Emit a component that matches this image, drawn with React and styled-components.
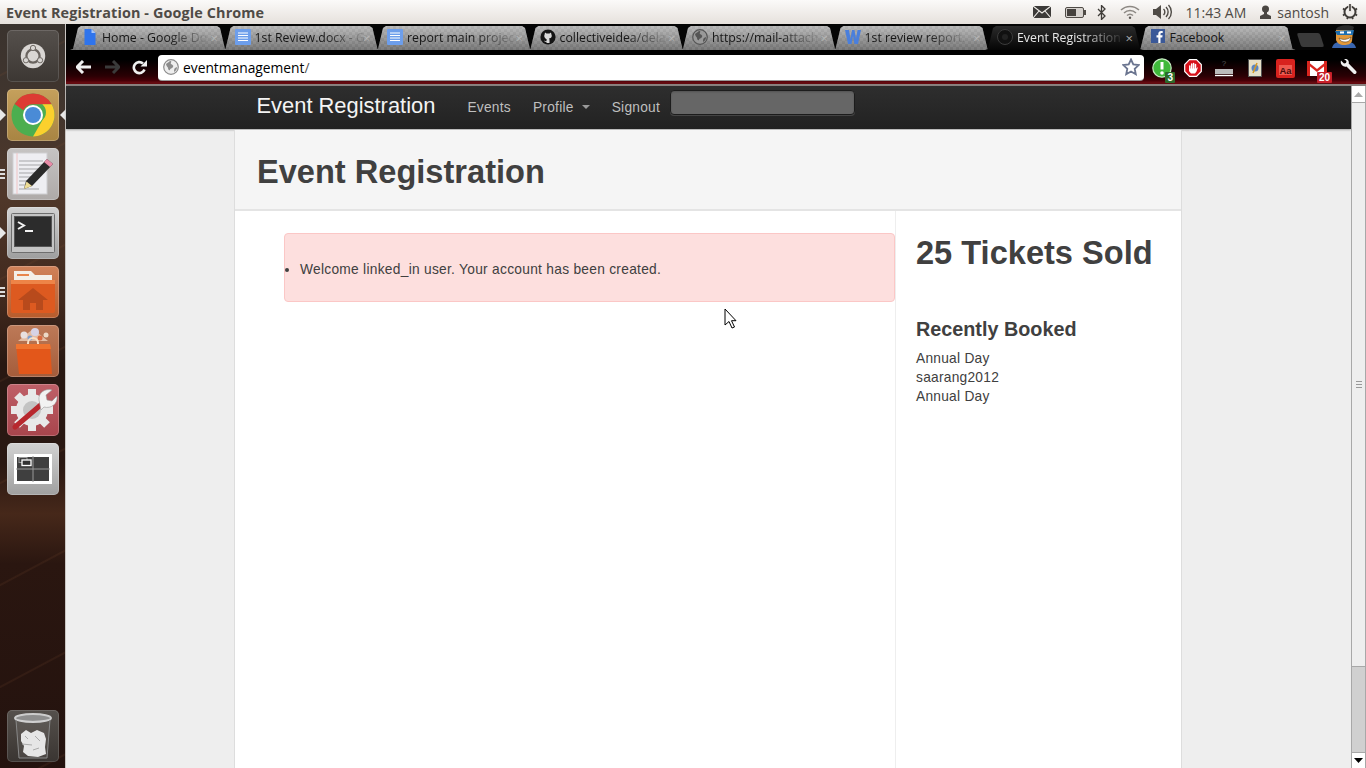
import React from "react";
import styled, { createGlobalStyle } from "styled-components";

const Global = createGlobalStyle`
  html, body { margin: 0; padding: 0; height: 768px; overflow: hidden; background: #eee; }
  * { box-sizing: border-box; }
  #root { height: 768px; }
`;
const UI = `"Open Sans", "Noto Sans", sans-serif`;
const WEB = `"Liberation Sans", Arial, sans-serif`;

const Screen = styled.div`position: relative; width: 1366px; height: 768px; display: flex; flex-direction: column; overflow: hidden;`;
const TitleBar = styled.header`
  height: 24px; flex: none; display: flex; align-items: center; justify-content: space-between; padding: 0 8px 0 6px;
  background: linear-gradient(#fbfaf9, #e6e1dc); font-family: ${UI}; color: #4f4b46;
`;
const WindowTitle = styled.div`font-size: 14.4px; font-weight: 700; letter-spacing: 0.12px;`;
const Indicators = styled.div`display: flex; align-items: center; height: 24px;`;
const Indicator = styled.span`display: flex; align-items: center; margin-left: ${p => p.$gap}px; font-size: 14px; color: #4f4b46; white-space: nowrap;`;
const Desk = styled.div`flex: 1; display: flex; min-height: 0;`;
const Launcher = styled.nav`
  width: 66px; flex: none; position: relative; display: flex; flex-direction: column; align-items: center; padding: 6px 0; gap: 7px;
  border-right: 1px solid #c9c5c2;
  background:
    repeating-linear-gradient(152deg, transparent 0 44px, rgba(130,80,50,.14) 45px 46px, transparent 47px 90px),
    linear-gradient(#3a332e 0, #40352e 70px, #50382a 170px, #40281d 280px, #281812 340px, #2a1812 440px, #46281a 490px, #2a1610 540px, #23120e 768px);
`;
const Tile = styled.div`
  position: relative; width: 52px; height: 52px; flex: none; border-radius: 5px; display: flex; align-items: center; justify-content: center;
  background: ${p => p.$bg}; box-shadow: inset 0 0 0 1px rgba(255,255,255,.22);
  ${p => p.$bottom && "margin-top: auto;"}
  ${p => p.$ghost && "box-shadow: inset 0 0 0 1px rgba(255,255,255,.14);"}
`;
const ArrowPip = styled.i`
  position: absolute; top: 20px; ${p => p.$right ? "right: -7px; border-right: 6px solid #e8e8e8;" : "left: -7px; border-left: 6px solid #e8e8e8;"}
  border-top: 6px solid transparent; border-bottom: 6px solid transparent; width: 0; height: 0;
`;
const DotPips = styled.i`position: absolute; left: -7px; top: ${p => p.$top}px; display: flex; flex-direction: column; gap: 2px;`;
const Dot = styled.b`display: block; width: 5px; height: 2px; background: #ddd;`;
const Browser = styled.main`flex: 1; min-width: 0; display: flex; flex-direction: column; background: #000;`;
const TabStrip = styled.div`height: 26px; flex: none; display: flex; padding: 2px 0 0 4px; position: relative; background: #050505;`;
const Tab = styled.div`
  width: 158px; margin-right: -5.5px; height: 24px; flex: none; position: relative; display: flex; align-items: center; padding: 0 0 2px 12px;
  ${p => p.$active && "z-index: 1;"}
  clip-path: polygon(0 100%, 3px 96%, 8px 8%, 11px 0, calc(100% - 11px) 0, calc(100% - 8px) 8%, calc(100% - 3px) 96%, 100% 100%);
  font-family: ${UI}; font-size: 12.3px; color: ${p => p.$active ? "#e8e8e8" : "#161616"};
  background: ${p => p.$active
    ? "linear-gradient(#2b2b2b, #050505)"
    : "linear-gradient(rgba(225,225,225,.35), rgba(20,20,20,.3)), repeating-conic-gradient(#a8a8a8 0 25%, #999 0 50%) 0 0 / 6px 6px"};
`;
const TabIcon = styled.span`width: 16px; height: 16px; flex: none; display: flex; justify-content: center; margin-right: 4px;`;
const TabLabel = styled.span`
  white-space: nowrap;
  mask-image: ${p => p.$plain ? "none" : "linear-gradient(90deg, #000 62%, rgba(0,0,0,.08) 100%)"};
`;
const TabClose = styled.span`position: absolute; right: 10px; top: 3px; font-size: 13px; color: ${p => p.$active ? "#aaa" : "rgba(255,255,255,.3)"};`;
const NewTab = styled.div`width: 23px; height: 14px; flex: none; margin: 7px 0 0 9px; background: #3a3a3a; transform: skewX(18deg); border-radius: 2px;`;
const Mascot = styled.div`position: absolute; right: 8px; top: 0; width: 28px; height: 24px;`;
const Toolbar = styled.div`
  height: 36px; flex: none; display: flex; align-items: flex-start; padding: 5px 0 0 4px;
  border-bottom: 2px solid #8a8280;
  background: linear-gradient(#000 0, #000 10px, #2a0004 26px, #4a0008 31px, #640a10 32px, #640a10 34px);
`;
const NavBtn = styled.span`width: ${p => p.$w || 28}px; height: 24px; flex: none; display: flex; align-items: center; justify-content: center;`;
const Omnibox = styled.div`
  width: 986px; height: 25px; margin-left: 6px; flex: none; background: #fff; border-radius: 4px; display: flex; align-items: center; padding: 0 4px 1px 5px;
  font-family: ${UI}; font-size: 13.8px; color: #000; box-shadow: 0 1px 0 #999;
`;
const UrlIcon = styled.span`width: 16px; height: 16px; display: flex; margin-right: 4px;`;
const Url = styled.span`flex: 1;`;
const UrlSlash = styled.span`color: #555;`;
const Extensions = styled.div`display: flex; margin-left: 2px; padding-top: 1px;`;
const Ext = styled.span`position: relative; width: 31px; height: 24px; display: flex; align-items: center; justify-content: center;`;
const Badge = styled.b`
  position: absolute; right: ${p => p.$r}px; bottom: -3px; padding: 0 2px; height: 11px; font: 700 10px/11px ${WEB}; color: #fff; background: ${p => p.$bg}; border-radius: 1px;
`;
const Viewport = styled.div`flex: 1; min-height: 0; display: flex; background: #eee; position: relative;`;
const Page = styled.div`flex: 1; min-width: 0; display: flex; flex-direction: column; font-family: ${WEB}; color: #404040;`;
const NavBar = styled.div`
  height: 43px; flex: none; background: linear-gradient(#2e2e2e, #222); box-shadow: 0 1px 2px rgba(0,0,0,.3); display: flex; justify-content: center;
`;
const NavInner = styled.div`width: 948px; padding: 0 0 0 22px; display: flex; align-items: center;`;
const Brand = styled.a`font-size: 21.9px; color: #f4f4f4; margin-top: -4px;`;
const NavLink = styled.a`font-size: 13.75px; letter-spacing: 0.25px; color: #bfbfbf; margin-left: ${p => p.$gap}px; display: flex; align-items: center;`;
const Caret = styled.i`display: block; width: 0; height: 0; margin-left: 8px; border-left: 4px solid transparent; border-right: 4px solid transparent; border-top: 4px solid #999; margin-top: -1px;`;
const Search = styled.input`
  width: 185px; height: 25px; margin: -10px 0 0 10px; background: #666; border: 1px solid #1c1c1c; border-radius: 4px; box-shadow: inset 0 1px 2px rgba(0,0,0,.2), 0 1px 0 #444;
`;
const ContentRow = styled.div`flex: 1; min-height: 0; display: flex; justify-content: center; padding-right: 1px;`;
const Container = styled.section`width: 948px; flex: none; margin-top: 1px; background: #fff; border-left: 1px solid #ddd; border-right: 1px solid #ddd; display: flex; flex-direction: column; min-height: 0;`;
const Hero = styled.div`height: 81px; flex: none; background: #f5f5f5; border-bottom: 2px solid #e4e4e4; padding: 4px 0 0 22px; display: flex; align-items: center;`;
const HeroTitle = styled.h1`margin: 0; font-size: 32.6px; font-weight: 700; color: #404040;`;
const Columns = styled.div`flex: 1; display: flex; min-height: 0;`;
const MainCol = styled.div`width: 661px; flex: none; padding: 22px 0 0 49px; border-right: 1px solid #eee;`;
const Alert = styled.div`width: 611px; height: 69px; padding-top: 4px; background: #fddfde; border: 1px solid #fbc7c6; border-radius: 4px; font-size: 13.75px; display: flex; align-items: center;`;
const AlertList = styled.ul`margin: 0; padding: 0 0 0 15px; color: #404040; letter-spacing: 0.28px;`;
const SideCol = styled.aside`flex: 1; padding: 22px 0 0 20px;`;
const SideTitle = styled.h2`margin: 0; font-size: 32.6px; line-height: 40px; font-weight: 700;`;
const SideSub = styled.h3`margin: 41px 0 0; font-size: 19.8px; line-height: 30px; font-weight: 700;`;
const Booked = styled.div`margin-top: 5px; display: flex; flex-direction: column; font-size: 13.75px; line-height: 19px; letter-spacing: 0.25px;`;
const Scrollbar = styled.div`width: 15px; flex: none; display: flex; flex-direction: column; background: #d0d0d0; border-left: 1px solid #a8a8a8; border-right: 1px solid #a8a8a8;`;
const ScrollBtn = styled.div`height: 16px; flex: none; background: #fff; display: flex; align-items: center; justify-content: center; ${p => p.$down && "margin-top: auto; border-top: 1px solid #a8a8a8;"}`;
const Thumb = styled.div`height: 565px; flex: none; background: #eee; border-top: 1px solid #a8a8a8; border-bottom: 1px solid #a8a8a8; display: flex; align-items: center; justify-content: center;`;
const Grip = styled.div`width: 6px; height: 7px; background: repeating-linear-gradient(#999 0 1px, transparent 1px 3px);`;
const Cursor = styled.svg`position: absolute; left: 724px; top: 308px;`;

const Globe = ({ s = 16, c = "#8c8c8c", d = "#eee" }) => (
  <svg width={s} height={s} viewBox="0 0 16 16"><circle cx="8" cy="8" r="7.3" fill={d} stroke={c} strokeWidth="1.2" /><path d="M3 5c2-1 3-3 5-3 1 1-1 2 0 3s3 1 2 3-3 1-3 3c-1 1-2-1-2-2S3 7 3 5zM12 9l2-1c0 2-1 4-3 5 0-2 0-3 1-4z" fill={c} /></svg>
);
const DocIcon = () => (
  <svg width="16" height="16" viewBox="0 0 16 16"><rect width="16" height="16" fill="#6d9eeb" rx="1"/><path d="M3 4h10M3 6.500h10M3 9h10M3 11.500h10" stroke="#fff" strokeWidth="1.2"/></svg>
);
const DriveDoc = () => (
  <svg width="12" height="16" viewBox="3 0 11 16"><path d="M3 0h7l4 4v12H3z" fill="#2f74ec"/><path d="M10 0l4 4h-4z" fill="#a9c6f8"/></svg>
);
const GitHub = () => (
  <svg width="16" height="16" viewBox="0 0 16 16"><circle cx="8" cy="8" r="7.6" fill="#151515"/><path d="M5 3.500l1.500 1h3l1.500-1 .4 2c.8 1.500.4 3.500-2.400 4 .5.500.5 1 .5 2.500v2H6.500v-1.200c-1.500.3-2-.3-2.500-1.300 1 .3 1.500 1 2.500.6 0-.6 0-1 .3-1.600C4.200 9 3.800 7 4.600 5.500z" fill="#d9d9d9"/></svg>
);
const WIcon = () => <svg width="16" height="16" viewBox="0 0 16 16"><path d="M0 1h4l1.500 9L7 1h2.500L11 10l1.500-9H16l-3 14h-3.500L8 7l-1.500 8H3z" fill="#4a7fdc"/></svg>;
const ChromeDark = () => <svg width="16" height="16" viewBox="0 0 16 16"><circle cx="8" cy="8" r="7.500" fill="#111" stroke="#3c3c3c"/><circle cx="8" cy="8" r="3" fill="#222"/></svg>;
const FB = () => <svg width="14" height="14" viewBox="0 0 14 14"><rect width="14" height="14" fill="#3b5998"/><path d="M9.500 14V8.500h1.800l.3-2.200H9.500V5c0-.7.200-1.100 1.100-1.100h1.100V2c-.5-.1-1-.1-1.600-.1-1.700 0-2.800 1-2.800 2.900v1.500H5.500v2.200h1.800V14z" fill="#fff"/></svg>;

const tabs = [
  [<DriveDoc />, "Home - Google Do"], [<DocIcon />, "1st Review.docx - G"], [<DocIcon />, "report main projec"],
  [<GitHub />, "collectiveidea/dela"], [<Globe c="#555" d="#999" />, "https://mail-attach"], [<WIcon />, "1st review report."],
  [<ChromeDark />, "Event Registration", true], [<FB />, "Facebook", false, true],
];

const Dash = () => (
  <svg width="32" height="32" viewBox="0 0 34 34"><circle cx="17" cy="17" r="13" fill="#d9d6d3"/><circle cx="17" cy="17" r="7" fill="none" stroke="#6a645f" strokeWidth="2.400"/><circle cx="17" cy="8.500" r="2.800" fill="#d9d6d3" stroke="#6a645f"/><circle cx="9.500" cy="21.500" r="2.800" fill="#d9d6d3" stroke="#6a645f"/><circle cx="24.500" cy="21.500" r="2.800" fill="#d9d6d3" stroke="#6a645f"/></svg>
);
const ChromeLogo = () => (
  <svg width="44" height="44" viewBox="0 0 44 44">
    <circle cx="22" cy="22" r="21.500" fill="#4cae4f"/>
    <path d="M22 .5a21.500 21.500 0 0 1 18.600 10.750H22a10.750 10.750 0 0 0-9.600 5.900L3.600 10.900A21.500 21.500 0 0 1 22 .5z" fill="#dd3b33"/>
    <path d="M40.600 11.250A21.500 21.500 0 0 1 22 43.500l9.300-16.100a10.750 10.750 0 0 0 0-16.150z" fill="#fbd02d"/>
    <circle cx="22" cy="22" r="10" fill="#fff"/><circle cx="22" cy="22" r="8" fill="#4a8bd6"/>
  </svg>
);
const Gedit = () => (
  <svg width="42" height="44" viewBox="0 0 42 44">
    <rect x="1" y="1" width="34" height="41" fill="#eeeef2" stroke="#cfcfd2"/>
    <path d="M5 1v41" stroke="#f0c4c4"/><path d="M7 9h24M7 13h24M7 17h20M7 21h22M7 25h16M7 29h12M7 33h8M7 37h20" stroke="#a5a5a8" strokeWidth="1"/>
    <path d="M35 7l6 5-21 22-8 3 2-8z" fill="#2a2a2a"/><path d="M35 7l6 5-3 3-6-5z" fill="#e88ca8"/><path d="M14.500 29.500l5.500 4.500-8 3z" fill="#eedc96"/>
  </svg>
);
const Terminal = () => (
  <svg width="44" height="40" viewBox="0 0 44 40">
    <rect x=".5" y=".5" width="43" height="39" rx="1" fill="#c4c4c4" stroke="#6e6e6e"/><rect x="3.500" y="3.500" width="37" height="30" fill="#2c2c2c" stroke="#555"/>
    <path d="M7 9l6 3.500-6 3.500" fill="none" stroke="#f2f2f2" strokeWidth="2"/><path d="M14 18h8" stroke="#f2f2f2" strokeWidth="2"/>
  </svg>
);
const Folder = () => (
  <svg width="46" height="46" viewBox="0 0 46 46">
    <path d="M4 2h17l4 4h17v12H4z" fill="#f4efe8"/><path d="M7 5h12v2H7z" fill="#e9854c"/>
    <path d="M1 11h44v31a2 2 0 0 1-2 2H3a2 2 0 0 1-2-2z" fill="#dd5a20"/><path d="M1 11h44v4H1z" fill="#ee8447"/>
    <path d="M23 19L8 31h5v10h7v-7h6v7h7V31h5z" fill="#b84a1c"/>
  </svg>
);
const Bag = () => (
  <svg width="46" height="48" viewBox="0 0 46 48">
    <path d="M8 14L23 2l15 12z" fill="#f6dcc6" opacity=".7"/>
    <circle cx="14" cy="8" r="3.500" fill="#e8e0e0"/><circle cx="25" cy="5" r="4" fill="#d7d3e6"/><circle cx="36" cy="8" r="2.500" fill="#ecd9c6"/><circle cx="20" cy="11" r="2.500" fill="#7d9fd0"/><circle cx="30" cy="11" r="2.500" fill="#d96a40"/>
    <path d="M18 20v-4a5 5 0 0 1 10 0v4" fill="none" stroke="#f8e0c8" strokeWidth="2"/>
    <path d="M6 17h34l2 30H9z" fill="#e3571a"/><path d="M6 17h34l1 5H6z" fill="#ef7430"/>
  </svg>
);
const Settings = () => (
  <svg width="50" height="50" viewBox="0 0 50 50">
    <g stroke="#e8e8e8" strokeWidth="8"><path d="M24 4v8M24 38v8M3 25h8M37 25h8M9 10l6 6M33 34l6 6M9 40l6-6"/></g>
    <circle cx="24" cy="25" r="16" fill="#e8e8e8"/><circle cx="24" cy="25" r="9" fill="#c3c3c3"/>
    <path d="M7 42L35 18" stroke="#b8282e" strokeWidth="5" strokeLinecap="round"/>
    <path d="M31 15c-1-7 6-12 13-10l-6 5 1 5 5 1 5-5c1 8-6 13-13 11l-3 3z" fill="#f2f2f2" stroke="#999" strokeWidth=".6"/>
  </svg>
);
const Workspaces = () => (
  <svg width="38" height="30" viewBox="0 0 38 30">
    <rect x="1.500" y="1.500" width="35" height="27" fill="#3f3f3f" stroke="#fff" strokeWidth="3"/>
    <path d="M19 2v26M2 15h34" stroke="#999"/>
    <rect x="5" y="3.500" width="8" height="5" fill="none" stroke="#999"/><rect x="8" y="6" width="9" height="5.500" fill="#333" stroke="#fff" strokeWidth="1.300"/>
  </svg>
);
const Trash = () => (
  <svg width="40" height="48" viewBox="0 0 40 48">
    <ellipse cx="20" cy="6" rx="18" ry="4" fill="#8e8e8e" stroke="#ccc" strokeWidth="2"/>
    <path d="M3 8l3 38h28l3-38" fill="rgba(255,255,255,.08)" stroke="#888"/>
    <path d="M8 22l5-4 5 3 6-3 7 3 2 6-1 8 1 7-8 3-10-1-5-4 1-6-3-5z" fill="#e6e6e6"/>
    <path d="M9 32l10 1M22 24l5 5M12 24l3 3M20 38l6-2" stroke="#aaa"/>
  </svg>
);
const Mail = () => <svg width="18" height="12" viewBox="0 0 18 12"><rect width="18" height="12" fill="#3c3a38"/><path d="M0 0l9 7 9-7M0 12l6-7M18 12l-6-7" fill="none" stroke="#f1eeea" strokeWidth="1.100"/></svg>;
const Battery = () => <svg width="21" height="11" viewBox="0 0 21 11"><rect x=".5" y=".5" width="18" height="10" rx="1.500" fill="#d6d2ce" stroke="#4f4b46"/><rect x="2" y="2" width="9" height="7" fill="#45413d"/><rect x="19" y="3" width="2" height="5" fill="#4f4b46"/></svg>;
const Bluetooth = () => <svg width="9" height="15" viewBox="0 0 9 15"><path d="M1 4l7 7-3.500 3.500V.5L8 4l-7 7" fill="none" stroke="#3f3c38" strokeWidth="1.300"/></svg>;
const Wifi = () => <svg width="20" height="14" viewBox="0 0 20 14"><path d="M1 5a13 13 0 0 1 18 0M4 8a8.500 8.500 0 0 1 12 0M7 10.500a4.500 4.500 0 0 1 6 0" fill="none" stroke="#8d8984" strokeWidth="1.500"/><circle cx="10" cy="12.700" r="1.200" fill="#5c5854"/></svg>;
const Volume = () => <svg width="20" height="16" viewBox="0 0 20 16"><path d="M0 5h3l5-4v14l-5-4H0z" fill="#4f4b46"/><path d="M10.500 5a4 4 0 0 1 0 6M13 3a7 7 0 0 1 0 10M15.500 1a10 10 0 0 1 0 14" fill="none" stroke="#4f4b46" strokeWidth="1.400"/></svg>;
const User = () => <svg width="13" height="14" viewBox="0 0 13 14"><circle cx="6.500" cy="4" r="3.500" fill="#4a4642"/><path d="M5 7h3v2l4 2v3H1v-3l4-2z" fill="#4a4642"/></svg>;
const Power = () => <svg width="16" height="16" viewBox="0 0 16 16"><circle cx="8" cy="8" r="5.500" fill="none" stroke="#3f3c38" strokeWidth="2"/><path d="M8 0v8" stroke="#e8e4e0" strokeWidth="3.500"/><path d="M8 0v7" stroke="#3f3c38" strokeWidth="1.600"/><path d="M1 4.500L3 6M15 4.500L13 6M1 11.500L3 10M15 11.500L13 10M5 15l1-2M11 15l-1-2" stroke="#3f3c38" strokeWidth="1.800"/></svg>;

const MascotArt = () => (
  <svg width="28" height="24" viewBox="0 0 28 24">
    <path d="M2 24c1-5 6-7 12-7s11 2 12 7z" fill="#3a66b0"/>
    <path d="M6 6c0-5 14-6 18-3l-1 3z" fill="#2a2a2a"/>
    <path d="M6 6h17l-1 11c-1 3-4 4-8 4s-7-2-8-5z" fill="#e2993b"/>
    <path d="M5 7l19-1-1 5H7z" fill="#1e6fb0"/><rect x="10" y="7.500" width="4" height="2" fill="#fff"/><rect x="17" y="7.500" width="4" height="2" fill="#fff"/>
    <path d="M9 14c3 2 8 2 12-1-1 4-3 5-6 5s-5-1-6-4z" fill="#fff" stroke="#5a3a14" strokeWidth=".6"/>
  </svg>
);

const Back = ({ c = "#f0f0f0", flip }) => (
  <svg width="16" height="14" viewBox="0 0 16 14" style={flip ? { transform: "scaleX(-1)" } : undefined}><path d="M7 1L1 7l6 6M2 7h13" fill="none" stroke={c} strokeWidth="3"/></svg>
);
const Reload = () => <svg width="15" height="15" viewBox="0 0 15 15"><path d="M12.500 9.500A5.500 5.500 0 1 1 11 3.500" fill="none" stroke="#f0f0f0" strokeWidth="2.600"/><path d="M8.500 6.500H15V0z" fill="#f0f0f0"/></svg>;
const Star = () => <svg width="18" height="18" viewBox="0 0 18 18"><path d="M9 1.500l2.300 5 5.400.6-4 3.700 1.100 5.400L9 13.500l-4.800 2.700 1.100-5.400-4-3.700 5.400-.6z" fill="#fff" stroke="#6b7590" strokeWidth="1.800"/></svg>;
const Ex1 = () => <svg width="20" height="20" viewBox="0 0 20 20"><circle cx="10" cy="10" r="9.200" fill="#3fb83a" stroke="#c6ecc2" strokeWidth="1.200"/><path d="M10 4v7.500" stroke="#fff" strokeWidth="3"/><circle cx="10" cy="15" r="1.800" fill="#fff"/></svg>;
const AdBlock = () => (
  <svg width="18" height="18" viewBox="0 0 18 18">
    <path d="M5.500.7h7l4.800 4.800v7l-4.800 4.800h-7L.7 12.500v-7z" fill="#d8111a" stroke="#fff" strokeWidth="1.200"/>
    <path d="M5.800 7v4M7.700 5v5M9.600 4.500v5.500M11.500 5.500v5" stroke="#fff" strokeWidth="1.500" strokeLinecap="round"/>
    <path d="M5 9.500h7.200l1.800-1.500-1.500 4.500-1.500 2H7l-2-2.500z" fill="#fff"/>
  </svg>
);
const Ex3 = () => <svg width="20" height="20" viewBox="0 0 20 20"><text x="10" y="8" textAnchor="middle" fontSize="8" fill="#555" fontFamily="Liberation Sans">?</text><rect x="1" y="11" width="18" height="5" fill="#bbb"/><path d="M1 17.500h18" stroke="#fff" strokeWidth="1.400"/></svg>;
const Ex4 = () => <svg width="16" height="18" viewBox="0 0 16 18"><rect x="1.500" y=".5" width="13" height="17" fill="#e6e0c8" stroke="#555"/><circle cx="8" cy="9" r="3.500" fill="#5a86c4"/><path d="M10 4L6 14" stroke="#d89a22" strokeWidth="1.500"/></svg>;
const Ex5 = () => (
  <svg width="19" height="19" viewBox="0 0 19 19">
    <rect width="19" height="19" rx="2" fill="#d8221e"/><rect x="3" y="6" width="13" height="10" fill="#ee5a50"/>
    <text x="9.500" y="14.500" textAnchor="middle" fontSize="9.500" fontWeight="700" fill="#4a0a0a" fontFamily="Liberation Sans">Aa</text>
  </svg>
);
const Gmail = () => <svg width="20" height="15" viewBox="0 0 20 15"><rect width="20" height="15" fill="#fff"/><path d="M0 0h3v15H0zM17 0h3v15h-3zM0 0l10 8 10-8v3l-10 8L0 3z" fill="#d8251e"/></svg>;
const Wrench = () => <svg width="18" height="18" viewBox="0 0 18 18"><path d="M2 1.500l3 3 2-.5.500-2L5 0c3-.8 5.500 1.500 4.700 4.500L17 12c1.500 1.500-.5 4-2.300 2.800L7.500 7.500C4 8.500.8 5 2 1.500z" fill="#f0f0f0"/></svg>;

export default function App() {
  return (
    <Screen>
      <Global />
      <TitleBar>
        <WindowTitle>Event Registration - Google Chrome</WindowTitle>
        <Indicators>
          <Indicator $gap={0}><Mail /></Indicator>
          <Indicator $gap={14}><Battery /></Indicator>
          <Indicator $gap={11}><Bluetooth /></Indicator>
          <Indicator $gap={14}><Wifi /></Indicator>
          <Indicator $gap={13}><Volume /></Indicator>
          <Indicator $gap={13}>11:43 AM</Indicator>
          <Indicator $gap={13}><User /></Indicator>
          <Indicator $gap={5}>santosh</Indicator>
          <Indicator $gap={13}><Power /></Indicator>
        </Indicators>
      </TitleBar>
      <Desk>
        <Launcher>
          <Tile $ghost $bg="linear-gradient(#55504c,#3c3733)"><Dash /></Tile>
          <Tile $bg="linear-gradient(#c5a05c,#a88442)"><ArrowPip /><ArrowPip $right /><ChromeLogo /></Tile>
          <Tile $bg="linear-gradient(#c6c4c3,#aeaaa8)"><DotPips $top={21}><Dot /><Dot /><Dot /></DotPips><Gedit /></Tile>
          <Tile $bg="linear-gradient(#d2d2d2,#9e9e9e)"><ArrowPip /><Terminal /></Tile>
          <Tile $bg="linear-gradient(#d0825a,#b85c2c)"><DotPips $top={21}><Dot /><Dot /><Dot /></DotPips><Folder /></Tile>
          <Tile $bg="linear-gradient(#bd7a58,#a55c3a)"><Bag /></Tile>
          <Tile $bg="linear-gradient(#bf6068,#a8454c)"><Settings /></Tile>
          <Tile $bg="linear-gradient(#d2d2d2,#a0a0a0)"><Workspaces /></Tile>
          <Tile $bottom $ghost $bg="linear-gradient(#55504c,#3a3532)"><Trash /></Tile>
        </Launcher>
        <Browser>
          <TabStrip>
            {tabs.map(([icon, label, active, plain], i) => (
              <Tab key={i} $active={active}>
                <TabIcon>{icon}</TabIcon>
                <TabLabel $plain={plain}>{label}</TabLabel>
                <TabClose $active={active}>×</TabClose>
              </Tab>
            ))}
            <NewTab />
            <Mascot><MascotArt /></Mascot>
          </TabStrip>
          <Toolbar>
            <NavBtn><Back /></NavBtn>
            <NavBtn><Back c="#3a3a3a" flip /></NavBtn>
            <NavBtn $w={26}><Reload /></NavBtn>
            <Omnibox>
              <UrlIcon><Globe /></UrlIcon>
              <Url>eventmanagement<UrlSlash>/</UrlSlash></Url>
              <Star />
            </Omnibox>
            <Extensions>
              <Ext><Ex1 /><Badge $r={2} $bg="#2d6a2a">3</Badge></Ext>
              <Ext><AdBlock /></Ext>
              <Ext><Ex3 /></Ext>
              <Ext><Ex4 /></Ext>
              <Ext><Ex5 /></Ext>
              <Ext><Gmail /><Badge $r={0} $bg="#c8202a">20</Badge></Ext>
              <Ext><Wrench /></Ext>
            </Extensions>
          </Toolbar>
          <Viewport>
            <Page>
              <NavBar>
                <NavInner>
                  <Brand>Event Registration</Brand>
                  <NavLink $gap={32}>Events</NavLink>
                  <NavLink $gap={22}>Profile<Caret /></NavLink>
                  <NavLink $gap={22}>Signout</NavLink>
                  <Search aria-label="Search" />
                </NavInner>
              </NavBar>
              <ContentRow>
                <Container>
                  <Hero><HeroTitle>Event Registration</HeroTitle></Hero>
                  <Columns>
                    <MainCol>
                      <Alert><AlertList><li>Welcome linked_in user. Your account has been created.</li></AlertList></Alert>
                    </MainCol>
                    <SideCol>
                      <SideTitle>25 Tickets Sold</SideTitle>
                      <SideSub>Recently Booked</SideSub>
                      <Booked><span>Annual Day</span><span>saarang2012</span><span>Annual Day</span></Booked>
                    </SideCol>
                  </Columns>
                </Container>
              </ContentRow>
            </Page>
            <Scrollbar>
              <ScrollBtn><svg width="9" height="5" viewBox="0 0 9 5"><path d="M4.500 0L9 5H0z" fill="#aaa"/></svg></ScrollBtn>
              <Thumb><Grip /></Thumb>
              <ScrollBtn $down><svg width="9" height="5" viewBox="0 0 9 5"><path d="M4.500 5L9 0H0z" fill="#000"/></svg></ScrollBtn>
            </Scrollbar>
          </Viewport>
        </Browser>
      </Desk>
      <Cursor width="13" height="21" viewBox="0 0 13 21"><path d="M1 1v16l4-3.500 3 6.500 2.500-1-3-6.300H12z" fill="#fff" stroke="#000"/></Cursor>
    </Screen>
  );
}
